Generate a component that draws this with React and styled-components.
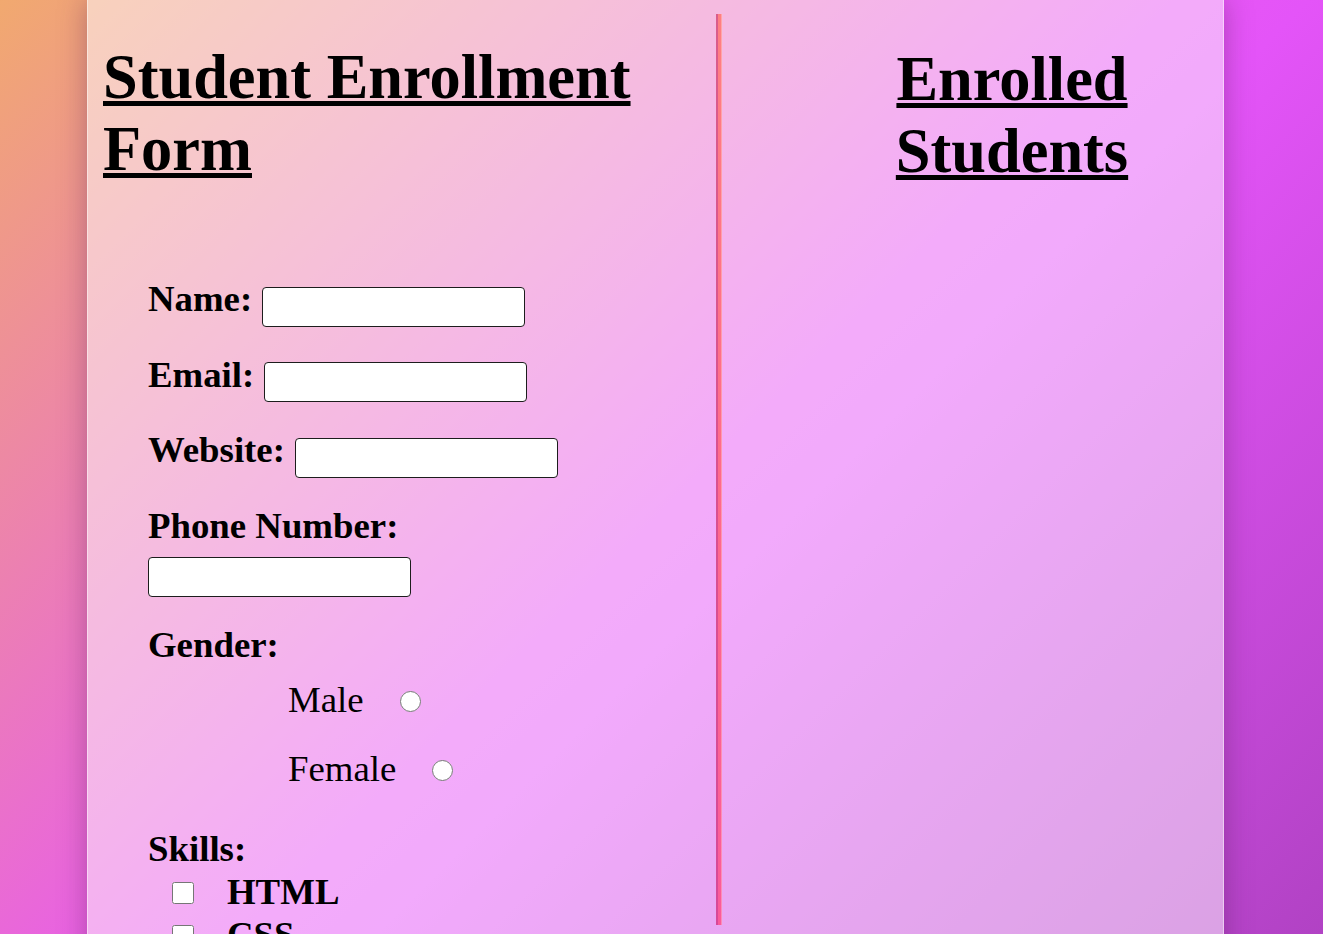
import React from 'react'
import styled, { createGlobalStyle } from 'styled-components'

const GlobalStyle = createGlobalStyle`
  html, body {
    margin: 0;
    padding: 0;
  }
  body {
    min-height: 100vh;
    font-family: "Liberation Serif", "Times New Roman", serif;
    color: #000;
    background: linear-gradient(135deg, #f1a96f 0%, #e757f4 52%, #e454f8 58%, #b142c4 100%) fixed;
  }
`

const Panel = styled.div`
    width: 1137px;
    min-height: 100vh;
    margin-left: 87px;
    box-sizing: border-box;
    display: flex;
    align-items: flex-start;
    background: rgba(255, 255, 255, 0.5);
    border-left: 1px solid rgba(255, 255, 255, 0.45);
    border-right: 1px solid rgba(255, 255, 255, 0.45);
    box-shadow: 0 0 26px rgba(70, 20, 70, 0.35);
`

const LeftColumn = styled.section`
    width: 628px;
    box-sizing: border-box;
    padding: 0 0 40px 15px;
`

const Divider = styled.div`
    flex: none;
    width: 6px;
    height: 911px;
    margin-top: 14px;
    background: linear-gradient(to bottom, #ff7f82, #ff6a8a 50%, #fb5a9a);
    box-shadow: inset 2px 0 rgba(170, 50, 150, 0.45), inset -1px 0 rgba(255, 255, 255, 0.3);
`

const RightColumn = styled.section`
    flex: 1;
    box-sizing: border-box;
    padding-left: 79px;
`

const Title = styled.h1`
    margin: ${(p) => (p.$right ? '43px' : '41px')} 0 0;
    font-size: 62.4px;
    font-weight: bold;
    line-height: normal;
    text-decoration: underline;
    text-decoration-thickness: 5px;
    text-underline-offset: 3px;
    text-align: ${(p) => (p.$right ? 'center' : 'left')};
`

const Form = styled.form`
    display: flex;
    flex-direction: column;
    align-items: flex-start;
    gap: 26px;
    margin: 92px 0 0 45px;
`

const Row = styled.div`
    display: flex;
    align-items: baseline;
    gap: 10px;
`

const StackRow = styled.div`
    display: flex;
    flex-direction: column;
    align-items: flex-start;
    gap: 10px;
`

const Label = styled.label`
    font-size: 36.8px;
    font-weight: bold;
    line-height: normal;
`

const TextInput = styled.input`
    width: 263px;
    height: 40px;
    box-sizing: border-box;
    margin: 0;
    padding: 0 8px;
    border: 1px solid #1d1d1d;
    border-radius: 4px;
    background: #fff;
    font-family: "Liberation Sans", Arial, sans-serif;
    font-size: 13.33px;
`

const Group = styled.div`
    display: flex;
    flex-direction: column;
    align-items: flex-start;
    margin-top: ${(p) => p.$offset || 0}px;
`

const Options = styled.div`
    display: flex;
    flex-direction: column;
    gap: 26px;
    margin-top: 12px;
    padding-left: 140px;
`

const Option = styled.label`
    display: flex;
    align-items: baseline;
    font-size: 36.8px;
    line-height: normal;
`

const Radio = styled.input`
    width: 21px;
    height: 21px;
    margin: 0 0 0 36px;
`

const Skills = styled.div`
    display: flex;
    flex-direction: column;
    gap: 0;
`

const Skill = styled.label`
    display: flex;
    align-items: baseline;
    font-size: 36.8px;
    font-weight: bold;
    line-height: normal;
`

const Check = styled.input`
    width: 22px;
    height: 22px;
    margin: 0 33px 0 24px;
`

const Submit = styled.button`
    margin-top: 10px;
    padding: 10px 24px;
    font-family: inherit;
    font-size: 24px;
    font-weight: bold;
    border: 1px solid #222;
    border-radius: 4px;
    background: #fff;
`

const App = () => {
    const fields = [
        { id: 'name', label: 'Name:', type: 'text' },
        { id: 'email', label: 'Email:', type: 'email' },
        { id: 'website', label: 'Website:', type: 'url' },
    ]
    const skills = ['HTML', 'CSS', 'JavaScript']

    return (
        <>
            <GlobalStyle />
            <Panel>
                <LeftColumn>
                    <Title>Student Enrollment Form</Title>
                    <Form onSubmit={(e) => e.preventDefault()}>
                        {fields.map((f) => (
                            <Row key={f.id}>
                                <Label htmlFor={f.id}>{f.label}</Label>
                                <TextInput id={f.id} type={f.type} />
                            </Row>
                        ))}
                        <StackRow>
                            <Label htmlFor="phone">Phone Number:</Label>
                            <TextInput id="phone" type="tel" />
                        </StackRow>
                        <Group>
                            <Label>Gender:</Label>
                            <Options>
                                <Option>
                                    Male
                                    <Radio type="radio" name="gender" value="male" />
                                </Option>
                                <Option>
                                    Female
                                    <Radio type="radio" name="gender" value="female" />
                                </Option>
                            </Options>
                        </Group>
                        <Group $offset={11}>
                            <Label>Skills:</Label>
                            <Skills>
                                {skills.map((s) => (
                                    <Skill key={s}>
                                        <Check type="checkbox" value={s} />
                                        {s}
                                    </Skill>
                                ))}
                            </Skills>
                        </Group>
                        <Submit type="submit">Enroll Student</Submit>
                    </Form>
                </LeftColumn>
                <Divider />
                <RightColumn>
                    <Title $right>Enrolled Students</Title>
                </RightColumn>
            </Panel>
        </>
    )
}

export default App
